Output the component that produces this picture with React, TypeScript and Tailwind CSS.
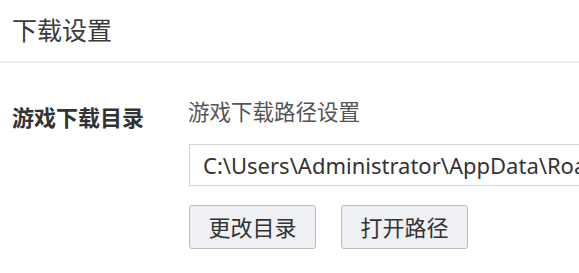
export default function App() {
  return (
    <div
      className="w-[579px] h-[273px] overflow-hidden bg-white text-[#333]"
      style={{ fontFamily: '"Noto Sans", "Noto Sans CJK SC", sans-serif' }}
    >
      {/* Header */}
      <div className="h-[63px] border-b-2 border-[#ececec] pl-[12px] pt-[14px]">
        <h1 className="text-[25px] leading-[32px] text-[#3a3a3a]">下载设置</h1>
      </div>

      {/* Row */}
      <div className="flex pt-[34px]">
        <div className="w-[188px] pl-[12px] pt-[5px] text-[22px] leading-[30px] font-bold text-[#333]">
          游戏下载目录
        </div>
        <div className="flex-1 min-w-0">
          <div className="text-[21.5px] leading-[30px] text-[#555]">游戏下载路径设置</div>
          <div className="mt-[17px] ml-[1px] h-[42px] w-[420px] border border-[#d4d4d4] flex items-center pl-[13px] whitespace-nowrap overflow-hidden text-[22px] text-[#333]">
            C:\Users\Administrator\AppData\Roaming\Game
          </div>
          <div className="mt-[19px] ml-[1px] flex gap-[25px]">
            <button className="w-[127px] h-[44px] rounded-[3px] border border-[#b9bcc0] bg-[#eef0f3] text-[22px] text-[#333]">
              更改目录
            </button>
            <button className="w-[127px] h-[44px] rounded-[3px] border border-[#b9bcc0] bg-[#eef0f3] text-[22px] text-[#333]">
              打开路径
            </button>
          </div>
        </div>
      </div>
    </div>
  )
}
